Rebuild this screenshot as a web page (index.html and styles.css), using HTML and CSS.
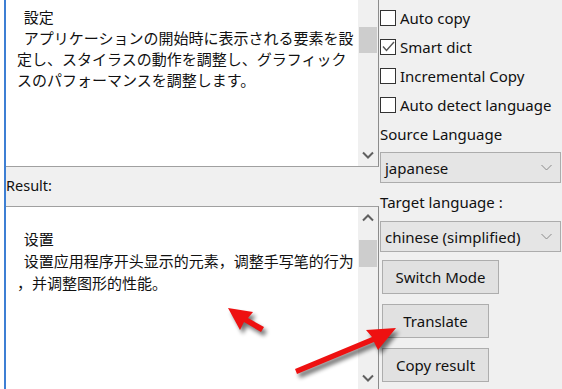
FILE: index.html
```html
<!DOCTYPE html>
<html lang="ja">
<head>
  <meta charset="UTF-8" />
  <title>Translator</title>
  <link rel="stylesheet" href="styles.css">
</head>
<body>

<div class="window">
  <div class="main">
    <!-- 原文 -->
    <div class="box box-top">
      <div class="text">  設定
  アプリケーションの開始時に表示される要素を設
定し、スタイラスの動作を調整し、グラフィック
スのパフォーマンスを調整します。</div>
      <div class="scroll">
        <div class="thumb thumb-top"></div>
        <div class="arrow arrow-down">
          <svg width="12" height="8" viewBox="0 0 12 8"><polyline points="1,1.5 6,6.5 11,1.5" fill="none" stroke="#606060" stroke-width="2"/></svg>
        </div>
      </div>
    </div>

    <div class="result-bar">Result:</div>

    <!-- 訳文 -->
    <div class="box box-bottom">
      <div class="text text-cn">  设置
  设置应用程序开头显示的元素，调整手写笔的行为
，并调整图形的性能。</div>
      <div class="scroll">
        <div class="arrow arrow-up">
          <svg width="12" height="8" viewBox="0 0 12 8"><polyline points="1,6.5 6,1.5 11,6.5" fill="none" stroke="#606060" stroke-width="2"/></svg>
        </div>
        <div class="thumb thumb-bottom"></div>
        <div class="arrow arrow-down">
          <svg width="12" height="8" viewBox="0 0 12 8"><polyline points="1,1.5 6,6.5 11,1.5" fill="none" stroke="#606060" stroke-width="2"/></svg>
        </div>
      </div>
    </div>
  </div>

  <div class="side">
    <label class="check"><span class="box-check"></span>Auto copy</label>
    <label class="check"><span class="box-check checked">
      <svg width="13" height="11" viewBox="0 0 13 11"><polyline points="1,5.5 4.5,9.5 12,1" fill="none" stroke="#555" stroke-width="1.4"/></svg>
    </span>Smart dict</label>
    <label class="check"><span class="box-check"></span>Incremental Copy</label>
    <label class="check"><span class="box-check"></span>Auto detect language</label>

    <div class="label label-source">Source Language</div>
    <div class="select">japanese
      <svg width="11" height="7" viewBox="0 0 11 7"><polyline points="0.5,1 5.5,6 10.5,1" fill="none" stroke="#8a8a8a" stroke-width="1"/></svg>
    </div>

    <div class="label label-target">Target language :</div>
    <div class="select">chinese (simplified)
      <svg width="11" height="7" viewBox="0 0 11 7"><polyline points="0.5,1 5.5,6 10.5,1" fill="none" stroke="#8a8a8a" stroke-width="1"/></svg>
    </div>

    <button class="btn btn-switch">Switch Mode</button>
    <button class="btn">Translate</button>
    <button class="btn">Copy result</button>
  </div>

  <!-- 注釈の矢印 -->
  <svg class="arrows" width="562" height="389" viewBox="0 0 562 389">
    <defs>
      <filter id="shadow" x="-50%" y="-50%" width="200%" height="200%">
        <feGaussianBlur stdDeviation="2.2"/>
      </filter>
    </defs>
    <g filter="url(#shadow)" fill="#000" opacity="0.55" transform="translate(3,4)">
      <polygon points="228,308 253,312 248,318 264,327 261,332 244,322 240,330"/>
      <polygon points="396,328 378,350 374,342 297,374 295,369 372,337 366,330"/>
    </g>
    <g fill="#ee1111">
      <polygon points="228,308 253,312 248,318 264,327 261,332 244,322 240,330"/>
      <polygon points="396,328 378,350 374,342 297,374 295,369 372,337 366,330"/>
    </g>
  </svg>
</div>

</body>
</html>
```

FILE: styles.css
```css
/* Reset */
* {
  margin: 0; padding: 0; box-sizing: border-box;
}

body {
  background: #fff;
  font-family: 'Noto Sans', 'Noto Sans CJK JP', sans-serif;
  font-size: 15px;
  color: #111;
  overflow: hidden;
}

.window {
  position: relative;
  display: flex;
  width: 562px;
  height: 389px;
  padding-left: 4px;
}

/* Left column */
.main {
  width: 375px;
  display: flex;
  flex-direction: column;
  border-left: 2px solid #3d7fd4;
}

.box {
  display: flex;
  background: #fff;
  border-right: 1px solid #8c8c8c;
}

.box-top {
  height: 167px;
  border-bottom: 1px solid #a0a0a0;
}

.box-bottom {
  flex: 1;
  border-top: 1px solid #a0a0a0;
}

.text {
  flex: 1;
  white-space: pre;
  font-family: 'Noto Sans CJK JP', sans-serif;
  font-size: 15px;
  line-height: 21px;
  padding: 6px 0 0 11px;
  overflow: hidden;
}

.text-cn {
  font-family: 'Noto Sans CJK SC', sans-serif;
  line-height: 22px;
  padding-top: 21px;
}

.scroll {
  width: 20px;
  background: #f0f0f0;
  display: flex;
  flex-direction: column;
  align-items: center;
}

.thumb {
  width: 18px;
  background: #cdcdcd;
}

.thumb-top {
  height: 26px;
  margin-top: 27px;
}

.thumb-bottom {
  height: 27px;
  margin-top: 12px;
}

.arrow {
  height: 20px;
  display: flex;
  align-items: center;
  justify-content: center;
}

.arrow-down {
  margin-top: auto;
  margin-bottom: 1px;
}

.arrow-up {
  margin-top: 1px;
}

.result-bar {
  height: 39px;
  background: #f0f0f0;
  line-height: 37px;
  font-size: 14.5px;
}

/* Right column */
.side {
  flex: 1;
  background: #f0f0f0;
  padding: 3px 0 0 1px;
  display: flex;
  flex-direction: column;
  align-items: flex-start;
}

.check {
  display: flex;
  align-items: center;
  height: 29px;
  font-size: 15px;
}

.box-check {
  width: 16px;
  height: 16px;
  border: 1px solid #333;
  background: #fff;
  margin-right: 4px;
  display: flex;
  align-items: center;
  justify-content: center;
}

.label {
  height: 30px;
  line-height: 30px;
}

.label-source {
  margin-bottom: 3px;
}

.label-target {
  margin-top: 4px;
  margin-bottom: 4px;
}

.select {
  width: 181px;
  height: 31px;
  background: #e5e5e5;
  border: 1px solid #acacac;
  display: flex;
  align-items: center;
  justify-content: space-between;
  padding: 0 8px 0 4px;
  font-size: 15px;
}

.btn {
  font-family: 'Noto Sans', sans-serif;
  font-size: 15px;
  color: #111;
  background: #e1e1e1;
  border: 1px solid #adadad;
  width: 107px;
  height: 34px;
  margin-left: 2px;
  margin-top: 10px;
}

.btn-switch {
  width: 117px;
  margin-top: 8px;
}

.arrows {
  position: absolute;
  top: 0; left: 0;
  pointer-events: none;
}
```
